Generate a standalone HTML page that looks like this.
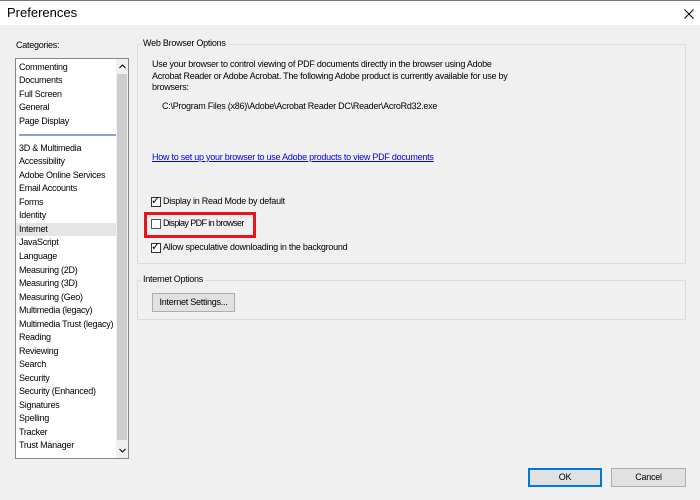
<!DOCTYPE html>
<html><head><style>
*{margin:0;padding:0;box-sizing:border-box}
body{width:700px;height:500px;background:#f0f0f0;font-family:"Liberation Sans",sans-serif;font-size:9px;color:#000;position:relative;overflow:hidden;letter-spacing:-0.25px}
.a{position:absolute;white-space:nowrap}
#tb{left:0;top:0;width:700px;height:25px;background:#fff;border-top:1px solid #777}
#list{left:15px;top:58px;width:114px;height:401px;background:#fff;border:1px solid #828790;overflow:hidden}
.it{position:absolute;left:3px;height:13px;line-height:13px}
.gb{position:absolute;border:1px solid #dcdcdc;}
.gl{position:absolute;background:#f0f0f0;padding:0 2px}
.cb{position:absolute;width:10px;height:10px;border:1px solid #333;background:#fff}
.btn{position:absolute;background:#e1e1e1;border:1px solid #adadad;text-align:center;line-height:17px}
</style></head><body>
<div class="a" id="tb"><span class="a" style="left:7px;top:4px;font-size:13px;letter-spacing:0">Preferences</span>
<svg class="a" style="left:684px;top:8px" width="10" height="10"><path d="M0.5 0.5L9.5 9.5M9.5 0.5L0.5 9.5" stroke="#000" stroke-width="1"/></svg></div>
<div class="a" style="left:16px;top:40px">Categories:</div>
<div class="a" id="list">
<div class="it" style="top:2px">Commenting</div>
<div class="it" style="top:15px">Documents</div>
<div class="it" style="top:29px">Full Screen</div>
<div class="it" style="top:42px">General</div>
<div class="it" style="top:56px">Page Display</div>
<div class="a" style="left:3px;top:75px;width:97px;height:2px;background:#7fa7d6"></div>
<div class="it" style="top:83px">3D &amp; Multimedia</div>
<div class="it" style="top:96px">Accessibility</div>
<div class="it" style="top:110px">Adobe Online Services</div>
<div class="it" style="top:123px">Email Accounts</div>
<div class="it" style="top:137px">Forms</div>
<div class="it" style="top:150px">Identity</div>
<div class="it" style="top:164px;left:0;width:100px;padding-left:3px;background:#e5e5e5">Internet</div>
<div class="it" style="top:177px">JavaScript</div>
<div class="it" style="top:191px">Language</div>
<div class="it" style="top:205px">Measuring (2D)</div>
<div class="it" style="top:218px">Measuring (3D)</div>
<div class="it" style="top:232px">Measuring (Geo)</div>
<div class="it" style="top:245px">Multimedia (legacy)</div>
<div class="it" style="top:259px">Multimedia Trust (legacy)</div>
<div class="it" style="top:272px">Reading</div>
<div class="it" style="top:286px">Reviewing</div>
<div class="it" style="top:299px">Search</div>
<div class="it" style="top:313px">Security</div>
<div class="it" style="top:326px">Security (Enhanced)</div>
<div class="it" style="top:340px">Signatures</div>
<div class="it" style="top:353px">Spelling</div>
<div class="it" style="top:367px">Tracker</div>
<div class="it" style="top:380px">Trust Manager</div>
<div class="a" style="left:100px;top:0;width:12px;height:399px;background:#f0f0f0">
<div class="a" style="left:1px;top:15px;width:10px;height:366px;background:#cdcdcd"></div>
<svg class="a" style="left:3px;top:5px" width="7" height="5"><path d="M0.5 4L3.5 1L6.5 4" fill="none" stroke="#000"/></svg>
<svg class="a" style="left:3px;top:389px" width="7" height="5"><path d="M0.5 1L3.5 4L6.5 1" fill="none" stroke="#000"/></svg>
</div>
</div>
<div class="gb" style="left:137px;top:44px;width:549px;height:220px"></div>
<div class="gl a" style="left:141px;top:38px">Web Browser Options</div>
<div class="a" style="left:152px;top:59px;line-height:11.5px">Use your browser to control viewing of PDF documents directly in the browser using Adobe<br>Acrobat Reader or Adobe Acrobat. The following Adobe product is currently available for use by<br>browsers:</div>
<div class="a" style="left:162px;top:101px">C:\Program Files (x86)\Adobe\Acrobat Reader DC\Reader\AcroRd32.exe</div>
<div class="a" style="left:152px;top:152px;color:#0000ee;text-decoration:underline">How to set up your browser to use Adobe products to view PDF documents</div>
<div class="cb" style="left:151px;top:197px"></div><div class="a" style="left:151px;top:194px;font-size:11px">✓</div>
<div class="a" style="left:163px;top:196px">Display in Read Mode by default</div>
<div class="a" style="left:144px;top:212px;width:112px;height:26px;border:3px solid #e8141c"></div>
<div class="cb" style="left:151px;top:219px;border-color:#555"></div>
<div class="a" style="left:163px;top:218px;letter-spacing:-0.6px">Display PDF in browser</div>
<div class="cb" style="left:151px;top:243px"></div><div class="a" style="left:151px;top:240px;font-size:11px">✓</div>
<div class="a" style="left:163px;top:242px">Allow speculative downloading in the background</div>
<div class="gb" style="left:137px;top:280px;width:549px;height:40px"></div>
<div class="gl a" style="left:141px;top:274px">Internet Options</div>
<div class="btn" style="left:152px;top:293px;width:83px;height:19px">Internet Settings...</div>
<div class="btn" style="left:528px;top:468px;width:74px;height:19px;border:2px solid #0078d7;line-height:15px">OK</div>
<div class="btn" style="left:611px;top:468px;width:75px;height:19px">Cancel</div>
</body></html>
